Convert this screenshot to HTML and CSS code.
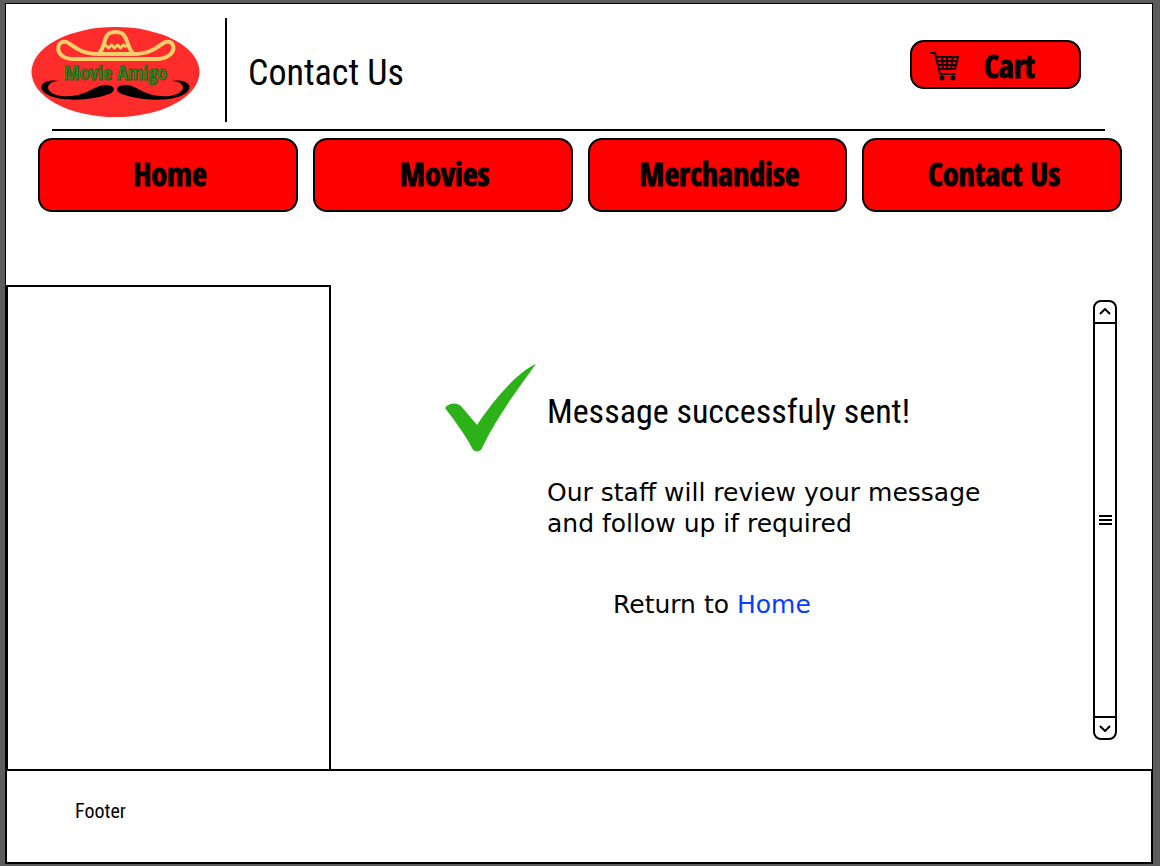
FILE: index.html
```html
<!DOCTYPE html>
<html lang="en">
<head>
<meta charset="utf-8">
<meta name="viewport" content="width=device-width, initial-scale=1">
<title>Movie Amigo - Contact Us</title>
<link rel="stylesheet" href="styles.css">
</head>
<body>
<div class="page">
  <header class="header">
    <svg class="logo" viewBox="0 0 168 90" role="img" aria-label="Movie Amigo">
      <ellipse cx="84" cy="45" rx="84" ry="45" fill="#ff2c2c"/>
      <g fill="none" stroke="#f8cf6a" stroke-width="4" stroke-linejoin="round">
        <path d="M67 27C47 27 40 17 35 15C26 13 24 24 31 29Q35 32 43 32H125Q133 32 138 28C145 22 142 13 134 15C128 17 122 27 102 27Z"/>
        <path d="M67 27C76 18 70 5 84 5S93 18 102 27"/>
        <path stroke-width="3" d="M74 18L77 21L80 18L83 21L86 18L89 21L92 18L95 20"/>
      </g>
      <text class="logo-text" x="84" y="53" text-anchor="middle">Movie Amigo</text>
      <path d="M28 54C12 51 4 60 15 67C32 77 67 72 80 66C85 62 82 58 74 58C62 58 55 71 30 69C14 67 11 55 28 54Z"/>
      <path d="M140 54C156 51 164 60 153 67C136 77 101 72 88 66C83 62 86 58 94 58C106 58 113 71 138 69C154 67 157 55 140 54Z"/>
    </svg>
    <h1 class="title">Contact Us</h1>
    <button class="cart" type="button">
      <svg class="cart-icon" viewBox="0 0 30 30" aria-hidden="true">
        <g fill="none" stroke="#160000" stroke-width="2">
          <path d="M0 2H5L10 23H26M6 6H28L25 18H9M7 10H27M8 14H26M12 6L13 18M17 6V18M23 6L21 18"/>
        </g>
        <circle cx="12" cy="27" r="2.500"/><circle cx="23" cy="27" r="2.500"/>
      </svg>
      <span>Cart</span>
    </button>
  </header>
  <nav class="nav" aria-label="Main">
    <a class="nav-link" href="#home">Home</a>
    <a class="nav-link" href="#movies">Movies</a>
    <a class="nav-link" href="#merchandise">Merchandise</a>
    <a class="nav-link" href="#contact">Contact Us</a>
  </nav>
  <div class="content">
    <aside class="sidebar"></aside>
    <main class="main">
      <svg class="check" viewBox="0 0 92 90" aria-hidden="true">
        <path fill="#2cb118" d="M0 45C5 39 12 40 16 43L32 62C47 39 72 9 91 1C75 23 52 54 38 83C36 90 29 90 27 85C21 73 10 58 0 45Z"/>
      </svg>
      <div class="message">
        <h2 class="message-title">Message successfuly sent!</h2>
        <p class="message-text">Our staff will review your message<br>and follow up if required</p>
        <p class="return">Return to <a class="return-link" href="#home">Home</a></p>
      </div>
    </main>
    <div class="scroller">
      <button class="scroll-button" type="button" aria-label="Scroll up">
        <svg class="arrow" viewBox="0 0 12 8" aria-hidden="true"><path d="M1 6L6 1L11 6"/></svg>
      </button>
      <div class="track"><span class="grip"></span></div>
      <button class="scroll-button" type="button" aria-label="Scroll down">
        <svg class="arrow" viewBox="0 0 12 8" aria-hidden="true"><path d="M1 2L6 7L11 2"/></svg>
      </button>
    </div>
  </div>
  <footer class="footer">Footer</footer>
</div>
</body>
</html>
```
FILE: styles.css
```css
* {
  box-sizing: border-box;
}

body {
  margin: 0;
  background: #5c5c5c;
  color: #000;
  font-family: "DejaVu Sans", Verdana, sans-serif;
}

.page {
  display: flex;
  flex-direction: column;
  min-height: 100vh;
  padding: 3px 7px 2px 5px;
}

.header,
.nav,
.content {
  background: #fff;
  border: 0 solid #000;
  border-width: 0 1px;
}

.header {
  display: flex;
  align-items: stretch;
  padding: 14px 71px 16px 25px;
  border-top-width: 1px;
}

.logo {
  align-self: flex-end;
  width: 169px;
  height: 90px;
  margin-bottom: 5px;
}

.logo-text {
  font: 700 20px "Open Sans Condensed", "Roboto Condensed", sans-serif;
  fill: #4a8c22;
  stroke: #176016;
  stroke-width: 1px;
}

.title {
  display: flex;
  align-items: center;
  margin: 0 0 0 25px;
  padding: 6px 0 0 21px;
  min-height: 104px;
  border-left: 2px solid #000;
  font: 36px "Roboto Condensed", Roboto, sans-serif;
}

.cart {
  display: flex;
  align-items: center;
  gap: 24px;
  width: 171px;
  height: 49px;
  margin: 22px 0 0 auto;
  padding: 2px 18px 0;
  border: 2px solid #000;
  border-radius: 14px;
  background: #f00;
  color: #000;
  font: 700 32px/40px "Open Sans Condensed", "Roboto Condensed", sans-serif;
  -webkit-text-stroke: 1px #000;
}

.cart-icon {
  width: 30px;
  height: 30px;
}

.nav {
  display: grid;
  grid-template-columns: repeat(4, 1fr);
  gap: 15px;
  padding: 0 30px 73px 32px;
  position: relative;
}

.nav::before {
  content: "";
  position: absolute;
  top: -9px;
  left: 46px;
  right: 47px;
  height: 2px;
  background: #000;
}

.nav-link {
  display: flex;
  align-items: center;
  justify-content: center;
  height: 74px;
  padding: 0 0 2px 4px;
  border: 2px solid #000;
  border-radius: 14px;
  background: #f00;
  color: #000;
  font: 700 32px/40px "Open Sans Condensed", "Roboto Condensed", sans-serif;
  -webkit-text-stroke: 1px #000;
  text-decoration: none;
}

.content {
  display: flex;
  flex: 1;
}

.sidebar {
  flex: none;
  width: 325px;
  border: 2px solid #000;
  border-bottom: 0;
}

.main {
  display: flex;
  flex: 1;
  align-items: flex-start;
  gap: 10px;
  min-width: 0;
  padding: 78px 0 0 114px;
}

.check {
  flex: none;
  width: 92px;
  height: 90px;
}

.message-title {
  margin: 16px 0 34px;
  font: 34px/64px "Roboto Condensed", Roboto, sans-serif;
  white-space: nowrap;
}

.message-text,
.return {
  margin: 0;
  font-size: 25px;
  line-height: 31px;
  white-space: nowrap;
}

.return {
  margin: 50px 0 0 66px;
}

.return-link {
  color: #0a3cff;
  text-decoration: none;
}

.scroller {
  display: flex;
  flex: none;
  flex-direction: column;
  width: 24px;
  margin: 15px 35px 29px 0;
  border: 2px solid #000;
  border-radius: 8px;
}

.scroll-button {
  display: flex;
  align-items: center;
  justify-content: center;
  height: 20px;
  padding: 0;
  border: 0;
  background: transparent;
}

.arrow {
  width: 12px;
  height: 8px;
  fill: none;
  stroke: #000;
  stroke-width: 2px;
}

.track {
  display: flex;
  flex: 1;
  align-items: center;
  justify-content: center;
  border: solid #000;
  border-width: 2px 0;
}

.grip {
  width: 13px;
  height: 10px;
  background: repeating-linear-gradient(#000 0 2px, #fff 2px 4px);
}

.footer {
  height: 95px;
  padding: 22px 68px;
  border: 2px solid #000;
  background: #fff;
  font: 20px/36px "Roboto Condensed", Roboto, sans-serif;
}
```
